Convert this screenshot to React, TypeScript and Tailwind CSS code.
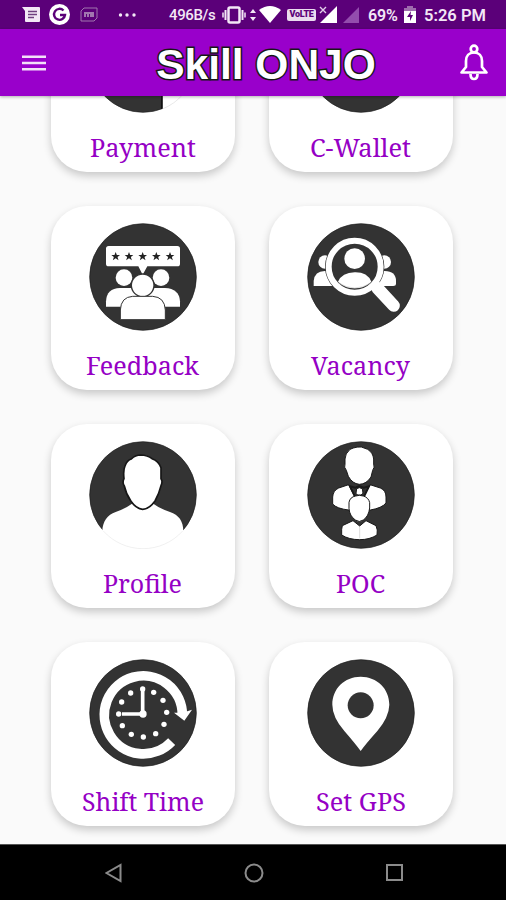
import type { ReactNode } from "react";

const INK = "#333333";

function Disc({ box, children }: { box: string; children?: ReactNode }) {
  const [x, y] = box.split(" ").map(Number);
  return (
    <svg viewBox={box} className="block size-[108px] shrink-0">
      <circle cx={x + 162} cy={y + 162} r="160" fill={INK} stroke="#1c1c1c" strokeWidth="2" />
      {children}
    </svg>
  );
}

function PaymentIcon() {
  return (
    <Disc box="0 0 324 324">
      <path d="M220 250h104v74H220z" fill="#fff" />
      <path d="M220 312A160 160 0 0 0 282 268" fill="none" stroke="#ddd" strokeWidth="2" />
      <path d="M219 260v51" stroke="#000" strokeWidth="4" />
    </Disc>
  );
}

function FeedbackIcon() {
  const star = "M0-13 3.5-4 13-4 5.500 2 8.500 12 0 6-8.500 12-5.500 2-13-4-3.500-4Z";
  return (
    <Disc box="147 69 324 324">
      <g fill="#fff">
        <path d="M206 138H412Q420 138 420 146V191Q420 199 412 199H322L308 224 295 199H206Q198 199 198 191V146Q198 138 206 138Z" />
        <circle cx="252" cy="233" r="25" />
        <circle cx="363" cy="233" r="25" />
        <path d="M198 320V304Q200 265 240 264H375Q418 266 420 304V320Z" />
        <circle cx="308" cy="256" r="34" stroke={INK} strokeWidth="4" />
        <path d="M241 359V330Q243 291 278 289H338Q374 291 376 330V359Z" stroke={INK} strokeWidth="3" />
      </g>
      {[227, 267, 308, 349, 390].map((x) => (
        <path key={x} d={star} transform={`translate(${x} 169)`} fill="#222" />
      ))}
    </Disc>
  );
}

function VacancyIcon() {
  return (
    <Disc box="141 69 324 324">
      <g fill="#fff">
        <circle cx="195" cy="186" r="20" />
        <circle cx="373" cy="186" r="20" />
        <path d="M161 258V243Q164 213 194 213T228 258Z" />
        <path d="M340 258Q340 213 374 213T408 243V252Q408 258 400 258Z" />
        <circle cx="284" cy="200" r="89" fill={INK} />
        <circle cx="284" cy="176" r="31" />
        <path d="M234 245Q246 218 284 217T334 245Q312 265 284 265T234 245Z" />
      </g>
      <path d="m352 264 49 53" stroke="#fff" strokeWidth="37" strokeLinecap="round" />
      <circle cx="284" cy="200" r="78" fill="none" stroke="#fff" strokeWidth="18" />
      <path d="M236 249Q284 279 332 249" fill="none" stroke="#bbb" strokeWidth="1.500" />
    </Disc>
  );
}

function ProfileIcon() {
  return (
    <Disc box="147 63 324 324">
      <path d="M187 333C188 305 202 284 227 276Q254 267 276 251L308 261 340 251Q360 266 390 276C416 284 430 304 430 333L450 340 420 390H190L165 340Z" fill="#fff" />
      <path d="M190 333A160 160 0 0 0 428 333" fill="none" stroke="#e8e8e8" strokeWidth="2" />
      <path d="M255 138Q261 121 274 117Q286 105 302 105Q323 106 336 116Q356 123 363 143V176Q369 184 363 197Q357 222 345 243Q327 268 308 268Q289 267 273 244Q258 222 253 198Q246 188 252 176Q249 151 255 138Z" fill="#fff" stroke="#161616" strokeWidth="5" />
    </Disc>
  );
}

function PocIcon() {
  return (
    <Disc box="141 63 324 324">
      <g fill="#fff" stroke="#191919" strokeWidth="3">
        <path d="M266 194Q277 217 285 231L298 226 311 231Q320 214 330 194L361 204Q378 211 378 231V249Q366 264 331 270L298 263 266 270Q230 266 218 252V231Q219 212 236 204Z" />
        <path d="M270 199 286 232H311L327 199 311 203 298 198 286 203Z" fill={INK} strokeWidth="6" />
        <path d="M270 88 280 84Q291 80 304 81L323 88Q339 98 341 117V132Q345 142 338 151L333 171Q320 192 298 193Q277 191 265 169L259 151Q251 142 255 132V117Q255 101 270 88Z" />
        <path d="m290 206 8-3 9 3 2 14-6 5h-10l-5-5Z" />
        <path d="M267 247Q270 231 287 228L298 226 310 228Q326 233 329 248V264Q326 289 310 300Q298 309 286 300Q269 288 267 266Z" />
        <path d="M247 317 279 302 299 318 318 302 348 317Q354 329 351 345Q329 359 299 359Q267 359 245 345V328Z" />
      </g>
      <path d="M299 321V355" stroke="#ccc" strokeWidth="2" />
    </Disc>
  );
}

function ShiftIcon() {
  const dots = [
    [308, 162], [341, 172], [369, 196], [380, 232], [372, 268], [347, 296],
    [310, 306], [274, 298], [247, 272], [236, 237], [245, 201], [272, 174],
  ];
  return (
    <Disc box="147 72 324 324">
      <path d="M395 320A117 117 0 1 1 427 240" fill="none" stroke="#fff" strokeWidth="29" />
      <path d="M402 233Q427 236 456 224L433 257Z" fill="#fff" />
      {dots.map(([x, y]) => (
        <circle key={`${x}-${y}`} cx={x} cy={y} r="8" fill="#fff" />
      ))}
      <path d="M308 162V237H246" fill="none" stroke="#fff" strokeWidth="11" />
      <circle cx="309" cy="237" r="11" fill="#fff" />
    </Disc>
  );
}

function GpsIcon() {
  return (
    <Disc box="141 72 324 324">
      <path d="M302 348Q286 326 253 288Q217 246 217 209C217 161 253 125 302 125S388 161 388 209Q387 246 352 288Q317 327 302 348Z" fill="#fff" />
      <circle cx="302" cy="211" r="39" fill={INK} />
    </Disc>
  );
}

const cards = [
  { label: "Payment", icon: <PaymentIcon />, width: 106 },
  { label: "C-Wallet", icon: <Disc box="0 0 324 324" />, width: 101 },
  { label: "Feedback", icon: <FeedbackIcon />, width: 113 },
  { label: "Vacancy", icon: <VacancyIcon />, width: 99 },
  { label: "Profile", icon: <ProfileIcon />, width: 79 },
  { label: "POC", icon: <PocIcon />, width: 49 },
  { label: "Shift Time", icon: <ShiftIcon />, width: 122 },
  { label: "Set GPS", icon: <GpsIcon />, width: 90 },
];

function StatusBar() {
  return (
    <div className="flex h-[29px] shrink-0 items-center bg-[#5b0079] pl-[22px] font-['Roboto',sans-serif] text-base font-medium text-[#f3e8f6]">
      <svg className="h-4 w-[18px]" viewBox="0 0 18 16">
        <path d="M0 0H17Q18 0 18 1V14Q18 15 17 15H4Q3 15 3 14V4Z" fill="#f3e8f6" />
        <path d="M6 4.500H15M6 7.500H15M6 10.500H12" stroke="#704080" strokeWidth="1.300" />
      </svg>
      <svg className="ml-[9px] size-[21px]" viewBox="0 0 21 21">
        <circle cx="10.500" cy="10.500" r="10.500" fill="#fff" />
        <path d="M14.500 6.500A5.500 5.500 0 1 0 16 11H11" fill="none" stroke="#5b0079" strokeWidth="2.400" />
      </svg>
      <svg className="ml-[10px] h-[15px] w-[18px]" viewBox="0 0 18 15" fill="none" stroke="#a176af">
        <path d="M1 14V4L4 1H17V11L14 14Z" />
        <path d="M5 10V6H8V10M8 6H11V10M11 6H13V10" strokeWidth="2" />
      </svg>
      <svg className="ml-[20px] h-1 w-[19px]" viewBox="0 0 19 4" fill="#f3e8f6">
        <circle cx="2.500" cy="2" r="1.700" /><circle cx="9" cy="2" r="1.700" /><circle cx="16" cy="2" r="1.700" />
      </svg>
      <span className="ml-[32px] mt-[2px] w-[47px] whitespace-nowrap text-[15px] tracking-[-0.4px]">496B/s</span>
      <svg className="ml-[6px] h-[18px] w-[24px]" viewBox="0 0 24 18" fill="none" stroke="#f3e8f6">
        <rect x="6.500" y="1.500" width="11" height="15" rx="1.500" strokeWidth="2.500" />
        <path d="M3.500 4V14M20.500 4V14" strokeWidth="2" />
        <path d="M1 6.500V11.500M23 6.500V11.500" strokeWidth="1.500" />
      </svg>
      <svg className="ml-[4px] h-[14px] w-[6px]" viewBox="0 0 6 14" fill="#f3e8f6">
        <path d="M0 5 3 1 6 5ZM0 9H6L3 13Z" />
      </svg>
      <svg className="ml-[3px] h-[17px] w-[22px]" viewBox="0 0 22 17" fill="#fff">
        <path d="M0 4Q11-4 22 4L11 17Z" />
      </svg>
      <span className="ml-[6px] flex h-[12px] w-[29px] items-center justify-center rounded-[2px] bg-[#eadcef] text-[9px] font-black tracking-[-0.3px] text-[#5b0079]">VoLTE</span>
      <svg className="ml-[3px] h-[17px] w-[18px]" viewBox="0 0 18 17">
        <path d="M18 0V17H1Z" fill="#fff" />
        <path d="M1 1 7 7M7 1 1 7" stroke="#e3cdea" strokeWidth="1.400" />
      </svg>
      <svg className="ml-[6px] h-[16px] w-[16px]" viewBox="0 0 16 16"><path d="M16 0V16H0Z" fill="#934dad" /></svg>
      <span className="ml-[9px] mt-[3px] w-[33px] whitespace-nowrap font-semibold tracking-[-0.2px]">69%</span>
      <svg className="ml-[3px] h-[17px] w-[12px]" viewBox="0 0 12 17">
        <path d="M0 2H3V0H9V2H12V5H0Z" fill="#9e6cae" /><path d="M0 5H12V17H0Z" fill="#fff" />
        <path d="M7 5 3 11H6V15L9 9H6.500Z" fill="#5b0079" />
      </svg>
      <span className="ml-[8px] mt-[3px] whitespace-nowrap text-[16.5px] font-semibold">5:26 PM</span>
    </div>
  );
}

export default function App() {
  return (
    <div className="flex h-[900px] w-[506px] flex-col overflow-hidden bg-[#fafafa]">
      <StatusBar />
      <header className="z-10 flex h-[67px] shrink-0 items-center justify-between bg-[#9900cb] pl-[22px] pr-[17px] shadow-[0_1px_3px_rgba(0,0,0,0.3)]">
        <svg className="h-[16px] w-[24px]" viewBox="0 0 24 16" stroke="#f3dff9" strokeWidth="2.500">
          <path d="M0 1.700H24M0 8H24M0 14.300H24" />
        </svg>
        <h1 className="ml-[27px] mt-[6px] whitespace-nowrap font-['Liberation_Sans',Arial,sans-serif] text-[42.5px] font-bold leading-none text-white [-webkit-text-stroke:3px_#171717] [paint-order:stroke_fill]">Skill ONJO</h1>
        <svg className="h-[37px] w-[30px]" viewBox="0 0 30 37" fill="none" stroke="#fff" strokeWidth="2.700">
          <circle cx="15" cy="5" r="3.300" />
          <path d="M7 23V17C7 12 10 8.500 15 8.500S23 12 23 17V23L27.500 28.500H2.500Z" strokeLinejoin="round" />
          <path d="M11.500 30Q11.500 35 15 35T18.500 30" />
        </svg>
      </header>
      <main className="min-h-0 flex-1 overflow-hidden">
        <div className="-mt-[108px] grid grid-cols-[184px_184px] gap-[34px] pl-[51px]">
          {cards.map(({ label, icon, width }) => (
            <section key={label} className="flex h-[184px] flex-col items-center rounded-[36px] bg-white pt-[17px] shadow-[0_4px_9px_rgba(0,0,0,0.2)]">
              {icon}
              <svg width={width} height="40" className="mr-px mt-[11px] overflow-visible">
                <text x="0" y="33" textLength={width} lengthAdjust="spacingAndGlyphs" fill="#9500c5" className="font-['Noto_Serif','Droid_Serif','DejaVu_Serif',serif] text-[25.5px]">{label}</text>
              </svg>
            </section>
          ))}
        </div>
      </main>
      <nav className="flex h-[56px] shrink-0 items-center justify-between border-t border-[#555] bg-black pl-[105px] pr-[103px]">
        <svg className="h-[20px] w-[17px]" viewBox="0 0 17 20" fill="none" stroke="#8b8b8b" strokeWidth="2"><path d="M15.500 2V18L1.500 10Z" /></svg>
        <svg className="size-[20px]" viewBox="0 0 20 20" fill="none" stroke="#8b8b8b" strokeWidth="2"><circle cx="10" cy="10" r="8.500" /></svg>
        <svg className="size-[17px]" viewBox="0 0 17 17" fill="none" stroke="#8b8b8b" strokeWidth="2"><rect x="1" y="1" width="15" height="15" /></svg>
      </nav>
    </div>
  );
}
